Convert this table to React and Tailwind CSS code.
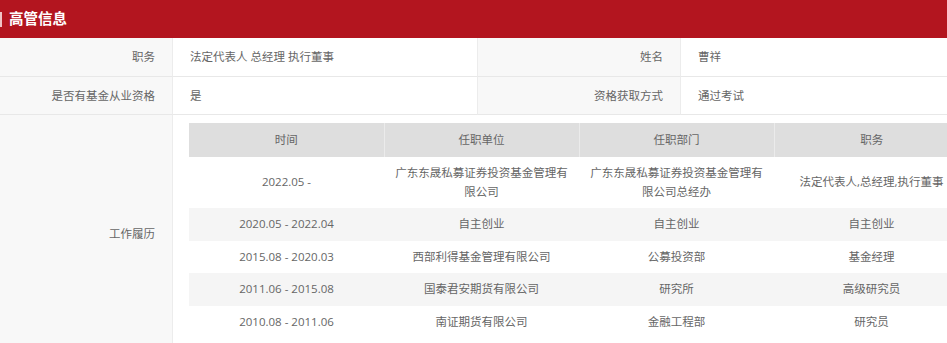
const history = [
  { time: '2022.05 -', org: '广东东晟私募证券投资基金管理有限公司', dept: '广东东晟私募证券投资基金管理有限公司总经办', title: '法定代表人,总经理,执行董事' },
  { time: '2020.05 - 2022.04', org: '自主创业', dept: '自主创业', title: '自主创业' },
  { time: '2015.08 - 2020.03', org: '西部利得基金管理有限公司', dept: '公募投资部', title: '基金经理' },
  { time: '2011.06 - 2015.08', org: '国泰君安期货有限公司', dept: '研究所', title: '高级研究员' },
  { time: '2010.08 - 2011.06', org: '南证期货有限公司', dept: '金融工程部', title: '研究员' },
];

function Label({ children, className = '' }) {
  return (
    <div className={`flex items-center justify-end bg-[#f8f8f8] pr-[17px] text-[#666] border-r border-[#ececec] ${className}`}>
      {children}
    </div>
  );
}

function Value({ children, className = '' }) {
  return <div className={`flex items-center pl-[17px] text-[#666] bg-white ${className}`}>{children}</div>;
}

export default function App() {
  return (
    <div
      className="w-[947px] h-[343px] overflow-hidden bg-white text-[11.5px]"
      style={{ fontFamily: '"Open Sans", "Noto Sans CJK SC", sans-serif' }}
    >
      <div className="h-[38px] bg-[#b3151f] flex items-center">
        <div className="w-[2px] h-[15px] bg-[#f0c4c6] mr-[7px]"></div>
        <h2 className="text-white font-bold text-[14.5px]">高管信息</h2>
      </div>

      <div className="grid grid-cols-[173px_305px_203px_1fr]">
        <Label className="h-[39px] border-b border-b-[#e8e8e8]">职务</Label>
        <Value className="h-[39px] border-b border-[#e8e8e8] border-r border-r-[#ececec]">法定代表人 总经理 执行董事</Value>
        <Label className="h-[39px] border-b border-b-[#e8e8e8]">姓名</Label>
        <Value className="h-[39px] border-b border-[#e8e8e8]">曹祥</Value>

        <Label className="h-[38px] border-b border-b-[#e8e8e8]">是否有基金从业资格</Label>
        <Value className="h-[38px] border-b border-[#e8e8e8] border-r border-r-[#ececec]">是</Value>
        <Label className="h-[38px] border-b border-b-[#e8e8e8]">资格获取方式</Label>
        <Value className="h-[38px] border-b border-[#e8e8e8]">通过考试</Value>

        <Label className="h-[236px] pt-[2px]">工作履历</Label>
        <div className="col-span-3 pl-[16px] pt-[8px] overflow-hidden">
          <table className="w-[780px] table-fixed border-collapse text-center text-[#666]">
            <thead>
              <tr className="bg-[#dedede]">
                {['时间', '任职单位', '任职部门', '职务'].map((h, i) => (
                  <th key={h} className={`h-[34px] font-normal ${i > 0 ? 'border-l border-[#ebebeb]' : ''}`}>{h}</th>
                ))}
              </tr>
            </thead>
            <tbody>
              {history.map((r, i) => (
                <tr key={r.time} className={i % 2 === 1 ? 'bg-[#f5f5f5]' : 'bg-white'}>
                  <td className="px-[10px] py-[7px] leading-[18.5px]">{r.time}</td>
                  <td className="px-[10px] py-[7px] leading-[18.5px]">{r.org}</td>
                  <td className="px-[10px] py-[7px] leading-[18.5px]">{r.dept}</td>
                  <td className="px-[10px] py-[7px] leading-[18.5px]">{r.title}</td>
                </tr>
              ))}
            </tbody>
          </table>
        </div>
      </div>
    </div>
  );
}
